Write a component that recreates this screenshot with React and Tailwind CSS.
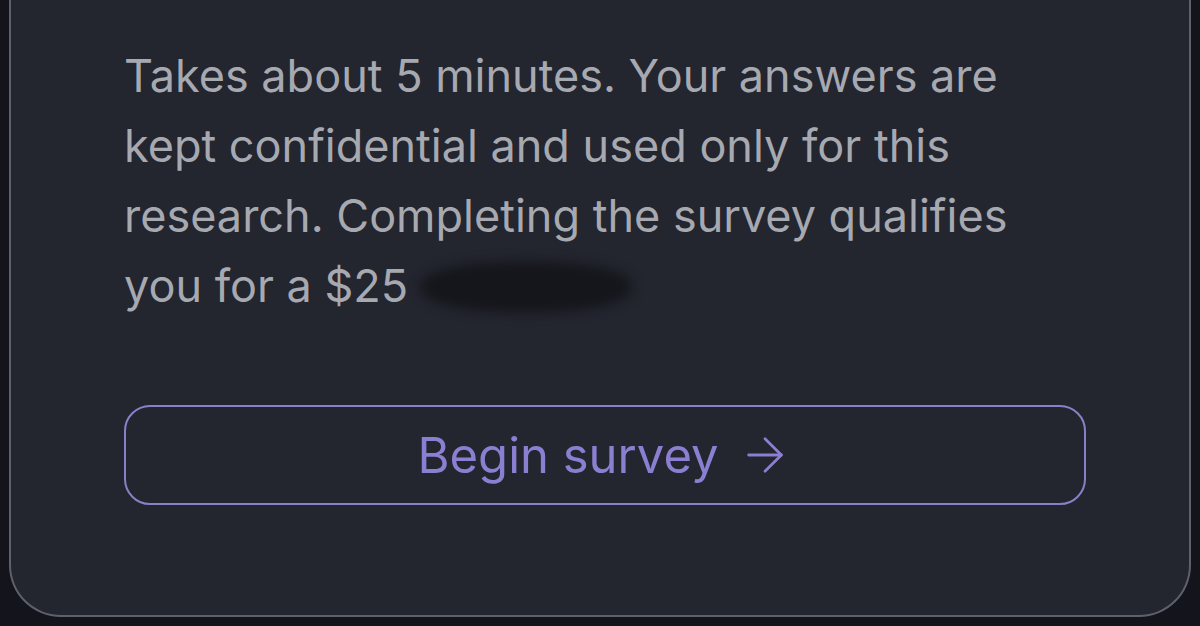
import { ArrowRight } from 'lucide-react';

export default function App() {
  return (
    <div className="w-[1200px] h-[626px] overflow-hidden bg-[#14151c] font-['Inter',sans-serif]">
      {/* card, top cut off by the viewport */}
      <div className="mx-[9px] h-[617px] bg-[#23252f] border-x-2 border-b-2 border-[#5e616c] rounded-b-[52px] pl-[113px] pr-[103px] pt-[41px]">
        <p className="text-[45px] leading-[70px] text-[#a7a9b1]">
          Takes about 5 minutes. Your answers are kept confidential and used only for this research. Completing the survey qualifies you for a $25{' '}
          <span className="inline-block align-middle w-[210px] h-[50px] -mt-[6px] bg-[#15161b] rounded-[45%] blur-[6px]" />
        </p>

        <button className="mt-[84px] w-full h-[100px] rounded-[26px] border-2 border-[#8a80c8] flex items-center justify-center gap-[18px] text-[#8b7fd2]">
          <span className="text-[49px] leading-none">Begin survey</span>
          <ArrowRight size={56} strokeWidth={1.2} />
        </button>
      </div>
    </div>
  );
}
